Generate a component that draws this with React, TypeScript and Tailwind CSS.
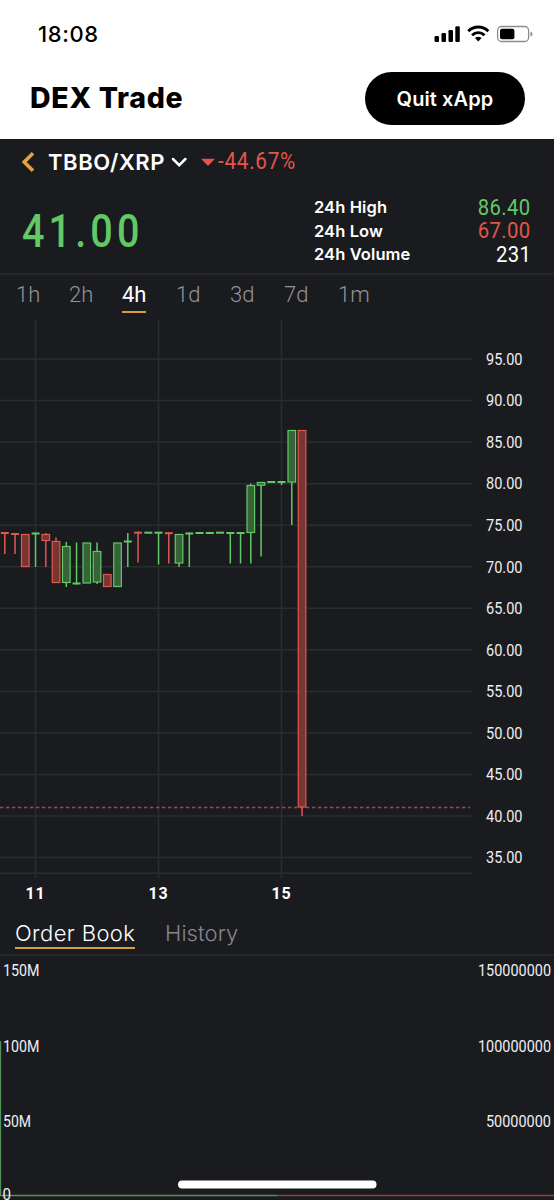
const intervals = [
  { label: "1h", className: "w-[53px]" },
  { label: "2h", className: "w-[53px]" },
  { label: "4h", className: "w-[54px]", active: true },
  { label: "1d", className: "w-[54px]" },
  { label: "3d", className: "w-[54px]" },
  { label: "7d", className: "w-[54px]" },
  { label: "1m", className: "w-[54px]" },
];

const stats = [
  { label: "24h High", value: "86.40", color: "text-[#62c966]" },
  { label: "24h Low", value: "67.00", color: "text-[#e4544a]" },
  { label: "24h Volume", value: "231", color: "text-white" },
];

const prices = [95, 90, 85, 80, 75, 70, 65, 60, 55, 50, 45, 40, 35];

const days = [
  { label: "11", x: 35.5 },
  { label: "13", x: 158.5 },
  { label: "15", x: 281.5 },
];

// side, body top, body bottom, wick top, wick bottom
type Candle = ["up" | "down", number, number, number, number];

const candles: Candle[] = [
  ["down", 533, 533, 532, 554],
  ["down", 534, 534, 533, 554],
  ["down", 534.5, 566.5, 534.5, 566.5],
  ["up", 533.5, 533.5, 532.5, 567],
  ["down", 534.5, 540.5, 533, 567],
  ["down", 541.5, 582.5, 537.5, 582.5],
  ["up", 546.5, 582.5, 542, 587],
  ["up", 583.5, 583.5, 542.5, 584.5],
  ["up", 543, 583, 543, 583],
  ["up", 551.5, 582, 542.5, 584],
  ["down", 574.5, 586.5, 574.5, 586.5],
  ["up", 543, 586.5, 543, 586.5],
  ["up", 541.5, 541.5, 533, 567],
  ["down", 532.7, 532.7, 531.5, 562.5],
  ["up", 532.7, 532.7, 532.7, 532.7],
  ["up", 532.7, 532.7, 532, 564.5],
  ["down", 533.2, 533.2, 532.5, 563.5],
  ["up", 534.5, 563, 534.5, 567],
  ["up", 533.5, 533.5, 532.5, 567],
  ["up", 533, 533, 533, 533],
  ["up", 533, 533, 533, 533],
  ["up", 532.7, 532.7, 532.7, 532.7],
  ["up", 533, 533, 532, 563.5],
  ["up", 533, 533, 532, 563.5],
  ["up", 485.5, 532.5, 483.5, 563.5],
  ["up", 482.5, 485.2, 482.5, 556.5],
  ["up", 482, 482, 482, 482],
  ["up", 482, 482, 481, 485],
  ["up", 430.5, 482, 430.5, 525],
  ["down", 430.5, 807, 430.5, 816],
];

const StatusBar = () => (
  <div className="flex h-[68px] items-center justify-between pl-[38px] pr-[21px]">
    <span className="text-[22px] font-medium leading-none tracking-[0.6px]">18:08</span>
    <svg width="99" height="20" viewBox="0 0 99 20">
      <rect x="0.5" y="12" width="4.5" height="6" rx="1.2" />
      <rect x="7.5" y="9" width="4.5" height="9" rx="1.2" />
      <rect x="14.5" y="6" width="4.5" height="12" rx="1.2" />
      <rect x="21.3" y="2.2" width="4.5" height="15.8" rx="1.2" />
      <g fill="none" stroke="black" strokeWidth="2.9">
        <path d="M34.3 7.2a14 14 0 0 1 20 0" />
        <path d="M38.1 11.2a8.8 8.8 0 0 1 12.4 0" />
      </g>
      <path d="M41 14.1q3.3-2.6 6.6 0l-3.3 3.4z" />
      <rect x="63.6" y="2.5" width="31" height="15" rx="4" fill="none" stroke="#8c8c8c" strokeWidth="1.3" />
      <rect x="66" y="4.8" width="14.4" height="10.5" rx="2" />
      <path d="M96.5 7.5q2 .5 2 2.5t-2 2.5z" fill="#8c8c8c" />
    </svg>
  </div>
);

const Header = () => (
  <header className="flex h-[71px] items-start justify-between pl-[30px] pr-[29px] pt-1">
    <h1 className="pt-2.5 text-[28.5px] font-extrabold leading-8 tracking-[0.7px]">DEX Trade</h1>
    <button className="h-[53px] w-40 rounded-full bg-black text-[20px] font-semibold leading-none tracking-[0.1px] text-white">
      Quit xApp
    </button>
  </header>
);

const Ticker = () => (
  <section className="h-[136px] border-b-2 border-[#25262a]">
    <div className="flex h-[45px] items-center pl-[21px]">
      <svg width="14" height="22" viewBox="0 0 14 22" fill="none" stroke="#e5a13a" strokeWidth="3.6">
        <path d="M12 2.2 3.2 11l8.8 8.8" />
      </svg>
      <span className="ml-[13px] w-[122px] whitespace-nowrap text-[22px] font-semibold leading-none tracking-[0.6px]">
        TBBO/XRP
      </span>
      <svg width="18" height="12" viewBox="0 0 18 12" fill="none" stroke="white" strokeWidth="2.5" strokeLinecap="round">
        <path d="M3 3l6.2 6.2L15.4 3" />
      </svg>
      <svg className="ml-3" width="16" height="12" viewBox="0 0 16 12" fill="#e4544a">
        <path d="M1 2.8h14L8 10z" />
      </svg>
      <span className="ml-0.5 origin-left scale-x-[0.9] font-['Roboto',sans-serif] text-[23px] font-normal leading-none tracking-[0.8px] text-[#e4544a]">
        -44.67%
      </span>
    </div>
    <div className="flex justify-between pl-[22px] pr-[23px]">
      <strong className="origin-left scale-x-[0.86] pt-[21px] font-['Roboto',sans-serif] text-[46px] font-medium leading-[52px] tracking-[4.8px] text-[#62c966]">
        41.00
      </strong>
      <dl className="w-[217px] shrink-0 pt-[11px]">
        {stats.map((stat) => (
          <div key={stat.label} className="flex h-[23.7px] items-center justify-between">
            <dt className="pt-px text-[16.5px] font-semibold leading-none tracking-[0.1px]">{stat.label}</dt>
            <dd
              className={`origin-right scale-x-[0.9] font-['Roboto',sans-serif] text-[22.5px] font-normal leading-none tracking-[0.4px] ${stat.color}`}
            >
              {stat.value}
            </dd>
          </div>
        ))}
      </dl>
    </div>
  </section>
);

const Intervals = () => (
  <nav className="flex h-[45px] pl-4 pt-[3px] font-['Roboto',sans-serif] text-[22px] font-light">
    {intervals.map((item) => (
      <div key={item.label} className={item.className}>
        <span
          className={
            item.active
              ? "inline-block h-[35px] border-b-2 border-[#dc9d3d] font-normal leading-[34px] text-white"
              : "inline-block h-[35px] leading-[34px] text-[#929397]"
          }
        >
          {item.label}
        </span>
      </div>
    ))}
  </nav>
);

const PriceChart = () => (
  <svg className="block" width="554" height="590" viewBox="0 320 554 590">
    <g stroke="#2b2c30" strokeWidth="1.5">
      {prices.map((price, i) => (
        <line key={price} x1="0" x2="472" y1={359 + i * 41.55} y2={359 + i * 41.55} />
      ))}
      <line x1="0" x2="472" y1="873.3" y2="873.3" />
      {days.map((day) => (
        <line key={day.label} x1={day.x} x2={day.x} y1="320" y2="878" />
      ))}
    </g>
    <line x1="0" x2="470" y1="807.5" y2="807.5" stroke="#a8413f" strokeWidth="1.4" strokeDasharray="3.4 2.6" />
    {candles.map(([side, top, bottom, high, low], i) => {
      const x = 4.8 + i * 10.25;
      const color = side === "up" ? "#62c966" : "#e4574d";
      return (
        <g key={i} stroke={color} strokeWidth="1.2">
          <line x1={x} x2={x} y1={high} y2={low} strokeWidth="1.5" />
          {top === bottom ? (
            <line x1={x - 4} x2={x + 4} y1={top} y2={top} strokeWidth="2" />
          ) : (
            <rect x={x - 3.8} y={top} width="7.6" height={bottom - top} fill={side === "up" ? "#366337" : "#783531"} />
          )}
        </g>
      );
    })}
    <g className="font-['Roboto',sans-serif] text-[16.5px]" fill="#eeeeef">
      {prices.map((price, i) => (
        <text key={price} x="486" y={364.8 + i * 41.55} textLength="36.5" lengthAdjust="spacingAndGlyphs">
          {price.toFixed(2)}
        </text>
      ))}
    </g>
    <g className="font-['Roboto',sans-serif] text-[16px] font-bold tracking-[0.8px]" fill="white" textAnchor="middle">
      {days.map((day) => (
        <text key={day.label} x={day.x} y="899">
          {day.label}
        </text>
      ))}
    </g>
  </svg>
);

const BookTabs = () => (
  <nav className="flex h-[46px] gap-[30px] border-b-2 border-[#25262a] pl-[15px] pt-2 text-[22px] font-light leading-[30px]">
    <span className="h-[31px] w-[120px] whitespace-nowrap border-b-2 border-[#dc9d3d] tracking-[0.4px] text-white">
      Order Book
    </span>
    <span className="tracking-[0.1px] text-[#85868a]">History</span>
  </nav>
);

const DepthChart = () => (
  <svg className="block" width="554" height="244" viewBox="0 956 554 244">
    <path d="M.5 1041V1195.5H277" fill="none" stroke="#539157" strokeWidth="1.3" />
    <line x1="277" x2="554" y1="1195.5" y2="1195.5" stroke="#963f3e" strokeWidth="1.3" />
    <g className="font-['Roboto',sans-serif] text-[16.5px]" fill="#eeeeef">
      <text x="3" y="976" textLength="36.5" lengthAdjust="spacingAndGlyphs">150M</text>
      <text x="3" y="1051.5" textLength="36.5" lengthAdjust="spacingAndGlyphs">100M</text>
      <text x="3" y="1127" textLength="28" lengthAdjust="spacingAndGlyphs">50M</text>
      <text x="2.5" y="1200" textLength="8.5" lengthAdjust="spacingAndGlyphs">0</text>
      <text x="478" y="976" textLength="73" lengthAdjust="spacingAndGlyphs">150000000</text>
      <text x="478" y="1051.5" textLength="73" lengthAdjust="spacingAndGlyphs">100000000</text>
      <text x="486" y="1127" textLength="65" lengthAdjust="spacingAndGlyphs">50000000</text>
    </g>
    <rect x="178" y="1180.5" width="198.5" height="8" rx="4" fill="white" />
  </svg>
);

const App = () => {
  return (
    <div className="h-[1200px] w-[554px] overflow-hidden bg-white font-['Inter',sans-serif] text-black">
      <StatusBar />
      <Header />
      <main className="bg-[#1a1b1f] text-white">
        <Ticker />
        <Intervals />
        <PriceChart />
        <BookTabs />
        <DepthChart />
      </main>
    </div>
  );
};

export default App;
